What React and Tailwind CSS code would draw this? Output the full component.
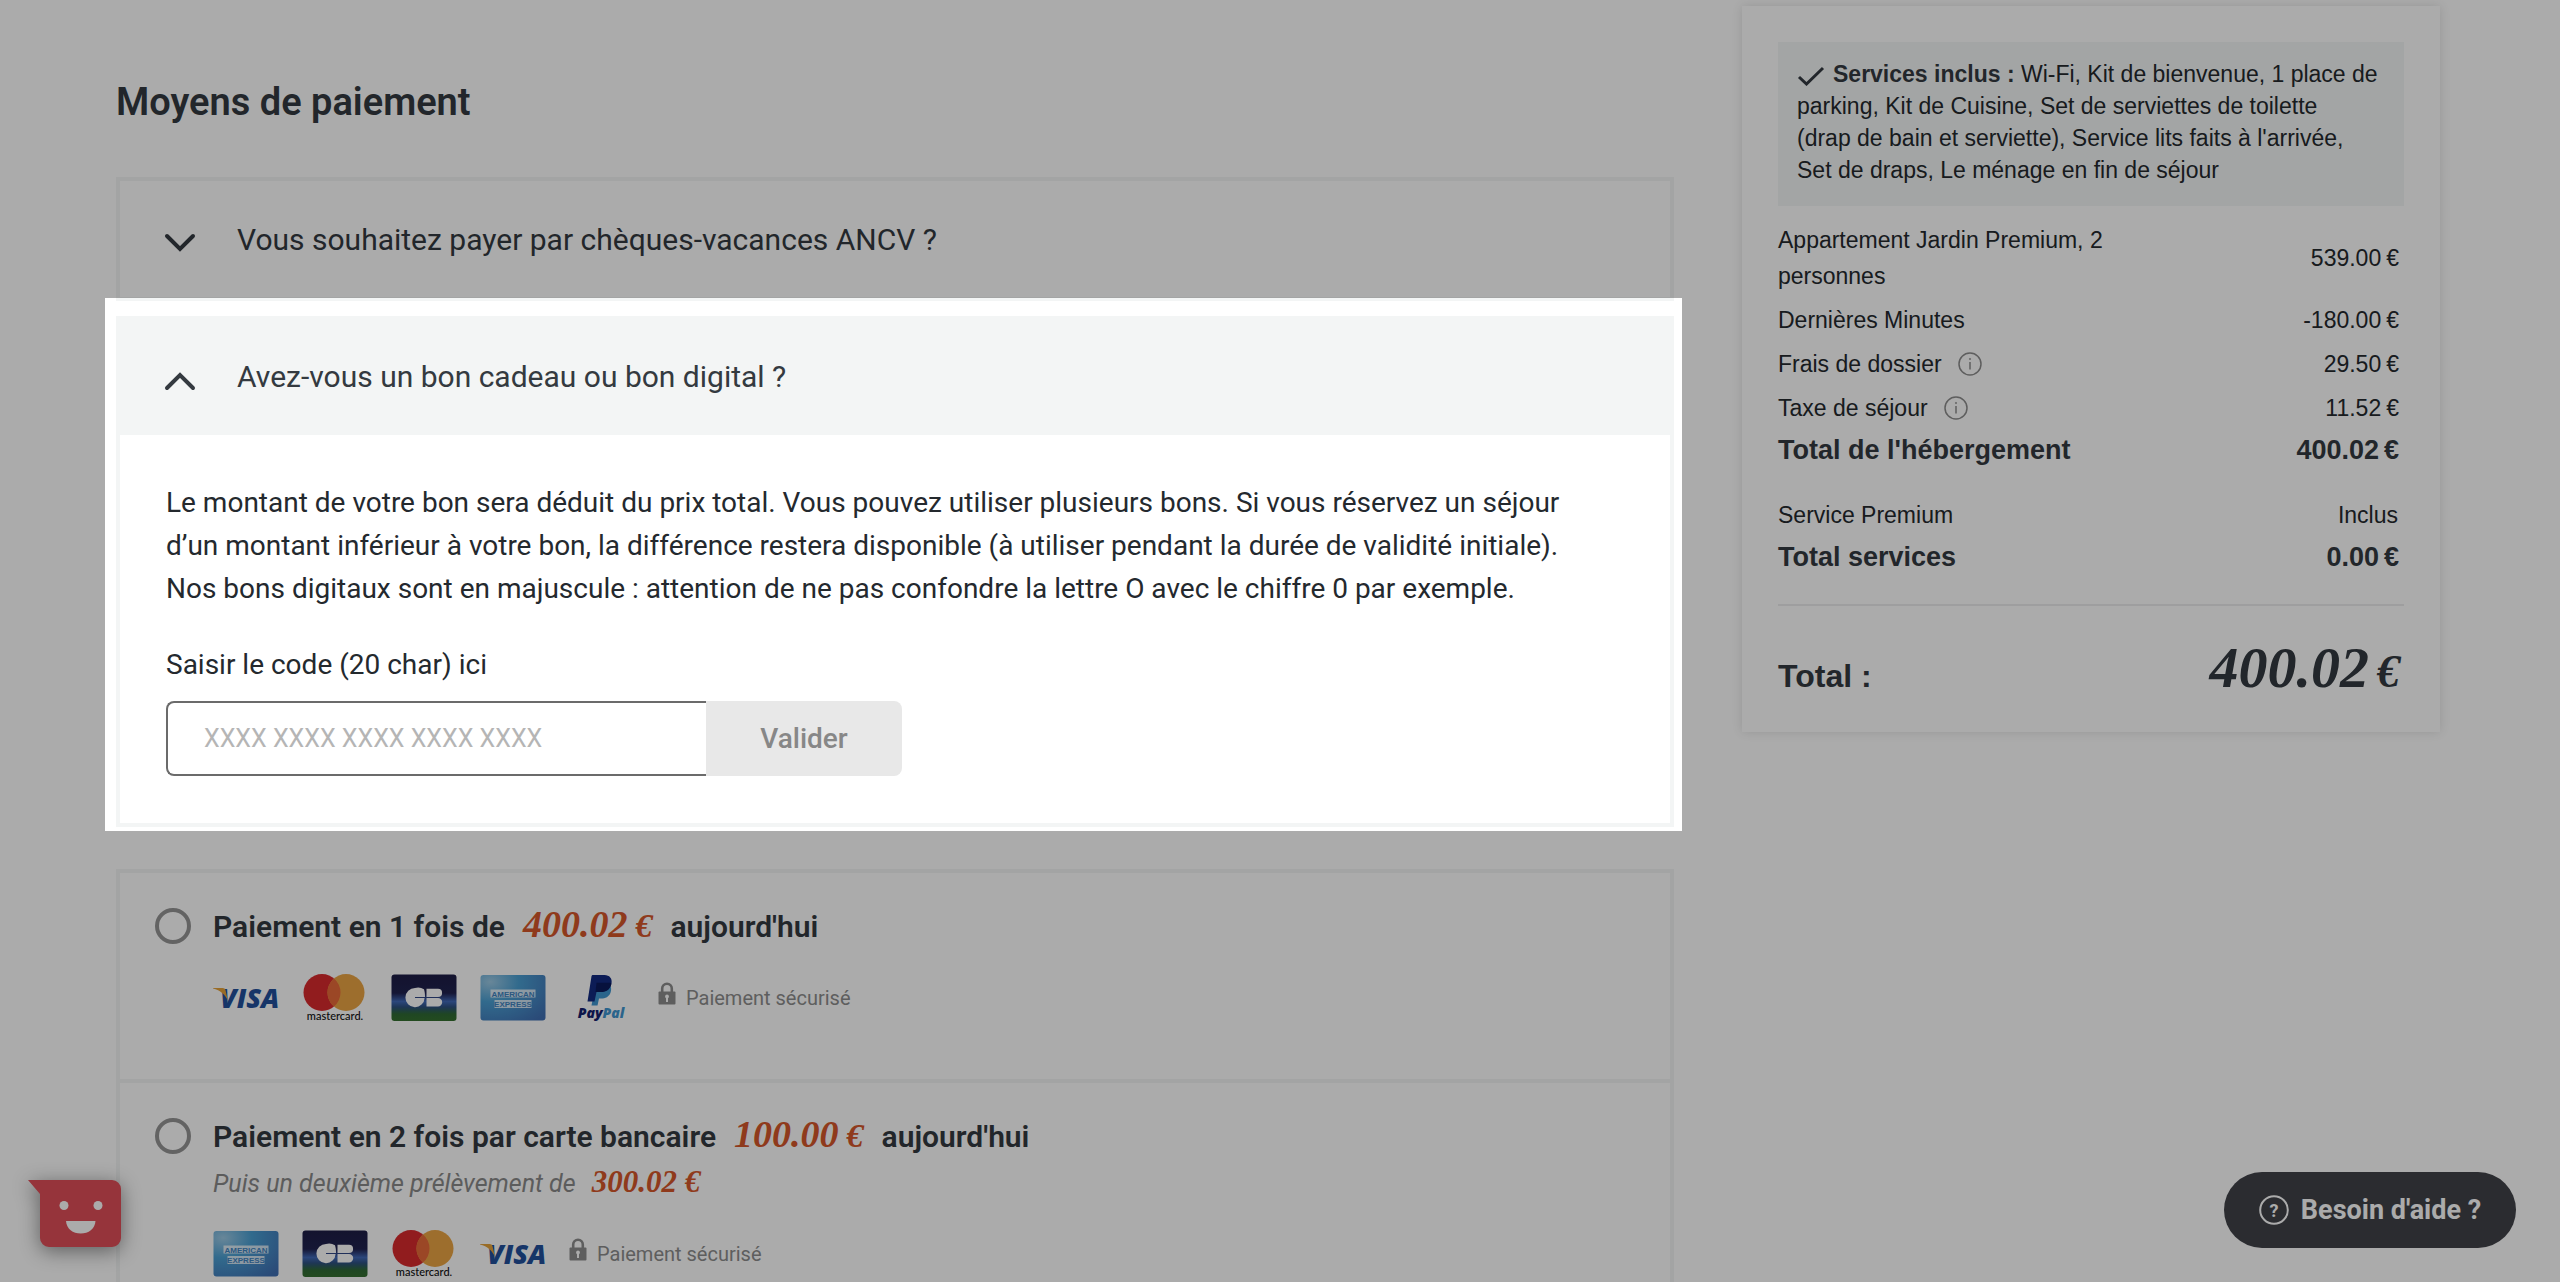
import React from "react";

const serif = "font-['Liberation_Serif',serif] font-bold italic";

function Chevron({ up }) {
  return (
    <svg viewBox="0 0 32 20" className="mt-2 h-5 w-8 shrink-0" fill="none" stroke="#343a40" strokeWidth="4" strokeLinecap="round">
      <path d={up ? "M3 17 16 4 29 17" : "M3 3 16 16 29 3"} />
    </svg>
  );
}

function Visa() {
  return (
    <svg viewBox="0 0 66 48" className="h-12 w-[66px]" role="img" aria-label="Visa">
      <text x="7" y="34" fontFamily="'Open Sans', 'Noto Sans', sans-serif" fontWeight="800" fontStyle="italic" fontSize="27" fill="#22509b">VISA</text>
      <path d="M0 14h9.5c1.700 0 2.600.8 3 2.300L15 27C12 20.500 7.500 16.500 0 14.600z" fill="#e5a13a" />
    </svg>
  );
}

function Mastercard() {
  return (
    <svg viewBox="0 0 66 48" className="h-12 w-[66px] overflow-visible" role="img" aria-label="Mastercard">
      <circle cx="20" cy="18.500" r="18.500" fill="#d82b2e" />
      <circle cx="44" cy="18.500" r="18.500" fill="#eba544" />
      <path d="M32 4.400a18.500 18.500 0 0 1 0 28.200 18.500 18.500 0 0 1 0-28.200z" fill="#e86a3a" />
      <text x="33" y="46" textAnchor="middle" fontFamily="Lato, sans-serif" fontWeight="500" fontSize="11" fill="#111">mastercard.</text>
    </svg>
  );
}

function CarteBancaire({ id }) {
  return (
    <svg viewBox="0 0 66 48" className="h-12 w-[66px]" role="img" aria-label="CB">
      <defs>
        <linearGradient id={id} x1="0" y1="0" x2="0" y2="1">
          <stop offset="0" stopColor="#1d1d45" />
          <stop offset="0.400" stopColor="#20224f" />
          <stop offset="0.580" stopColor="#4169b8" />
          <stop offset="0.700" stopColor="#2d5080" />
          <stop offset="0.850" stopColor="#2f6a35" />
          <stop offset="1" stopColor="#35702f" />
        </linearGradient>
      </defs>
      <rect x="0.500" y="0.500" width="65" height="46.500" rx="3" fill={`url(#${id})`} />
      <path d="M33 15.300A10.500 10 0 0 0 24 14a9.600 9.600 0 1 0 9.600 10H24v-1h10v-.500c0-3-.300-5-1-7.200z" fill="#fff" />
      <path d="M35.500 14.800H47a4.100 4.100 0 0 1 0 8.200H35.500zM35.500 24H47a4.200 4.200 0 0 1 0 8.400H35.500z" fill="#fff" />
    </svg>
  );
}

function Amex({ id }) {
  return (
    <svg viewBox="0 0 66 48" className="h-12 w-[66px]" role="img" aria-label="American Express">
      <defs>
        <radialGradient id={id} cx="0.150" cy="0.150" r="1.100">
          <stop offset="0" stopColor="#9cc9e4" />
          <stop offset="0.400" stopColor="#4a9fd2" />
          <stop offset="1" stopColor="#3f6fb3" />
        </radialGradient>
      </defs>
      <rect x="0.500" y="1" width="65" height="45.500" rx="3" fill={`url(#${id})`} />
      <rect x="10.500" y="15.500" width="45" height="8" fill="#fff" opacity="0.750" />
      <rect x="14.500" y="26" width="37" height="8" fill="#fff" opacity="0.750" />
      <g fontFamily="'Liberation Sans', sans-serif" fontWeight="700" fontSize="8" fill="#3f83c0" textAnchor="middle">
        <text x="33" y="22.500">AMERICAN</text>
        <text x="33" y="33">EXPRESS</text>
      </g>
    </svg>
  );
}

function PayPal() {
  return (
    <svg viewBox="0 0 66 48" className="h-12 w-[66px]" role="img" aria-label="PayPal">
      <path d="M38 9.500c4 1.500 5 5 3.500 9.200-1.500 4-5 5.800-9.500 5.800h-2l-1.500 7H22.500l3-16z" fill="#3f96d0" />
      <path d="M24 1h11.500c5 0 8 3.500 7 8.500-1.200 6-5.500 8.500-11 8.500h-4l-2 9.500H18.500L22.500 2.200C22.700 1.300 23.200 1 24 1z" fill="#122a80" />
      <path d="M27.500 8.700h13.800c1 .500 1 .800.900 1.500C41 15.700 36.800 18 31.500 18h-5z" fill="#0b1a5c" />
      <text x="32" y="44" textAnchor="middle" fontFamily="'Open Sans', sans-serif" fontWeight="800" fontStyle="italic" fontSize="14" fill="#12206e">
        Pay<tspan fill="#3f96d0">Pal</tspan>
      </text>
    </svg>
  );
}

function Secure() {
  return (
    <span className="flex items-center gap-[10px] text-[20px] leading-6 text-[#8d8d8d]">
      <svg viewBox="0 0 18 24" className="-mt-2 h-6 w-[18px]" aria-hidden="true">
        <path d="M4.200 10V6.500a4.800 4.800 0 0 1 9.600 0V10" fill="none" stroke="#8d8d8d" strokeWidth="2.600" />
        <rect x="0.500" y="9.500" width="17" height="13" rx="1" fill="#8d8d8d" />
        <circle cx="9" cy="14.500" r="1.900" fill="#fff" />
        <rect x="8" y="15" width="2" height="5" fill="#fff" />
      </svg>
      Paiement sécurisé
    </span>
  );
}

function Info() {
  return (
    <svg viewBox="0 0 24 24" className="h-6 w-6" fill="none" stroke="#8d8d8d" aria-hidden="true">
      <circle cx="12" cy="12" r="11" strokeWidth="1.500" />
      <path d="M12 10v7.500" strokeWidth="1.500" />
      <circle cx="12" cy="7" r="0.700" fill="#8d8d8d" strokeWidth="0.600" />
    </svg>
  );
}

function Row({ label, value, info, bold }) {
  return (
    <tr className={bold ? "h-10 text-[27px] leading-8 font-bold" : "leading-9 font-normal text-[#24292e]"}>
      <th scope="row" className="text-left font-[weight:inherit]">
        <span className={bold ? "flex items-center font-bold" : "flex items-center gap-4 font-normal"}>
          {label}
          {info && <Info />}
        </span>
      </th>
      <td className="pr-[5px] text-right whitespace-nowrap">
        {value}
        <span className="ml-[5px]">€</span>
      </td>
    </tr>
  );
}

function Option({ id, title, price, sub, children }) {
  return (
    <div className="flex gap-[22px] pt-[33px] pb-[57px] pl-[35px]">
      <input
        type="radio"
        name="paiement"
        id={id}
        className="mt-[2px] size-9 shrink-0 appearance-none rounded-full border-4 border-[#949494]"
      />
      <div>
        <label htmlFor={id} className="flex h-10 items-baseline text-[30px] leading-10 font-semibold whitespace-nowrap">
          {title}
          <span className={`${serif} mx-[18px] text-[38px] leading-9 text-[#d5572b]`}>
            {price}
            <span className="ml-2 text-[34px] leading-none">€</span>
          </span>
          aujourd'hui
        </label>
        {sub}
        <div className="mt-7 flex items-center gap-[23px]">
          {children}
          <Secure />
        </div>
      </div>
    </div>
  );
}

export default function App() {
  return (
    <div className="relative h-screen overflow-hidden bg-white font-['Roboto',sans-serif] text-[#343a40]">
      <main className="grid grid-cols-[minmax(0,1fr)_698px] gap-[68px] pr-[120px] pl-[116px]">
        <section className="pt-[78px]">
          <h1 className="text-[38px] leading-[48px] font-semibold">Moyens de paiement</h1>

          <div className="mt-[51px] border-4 border-[#f3f5f5]">
            <button type="button" className="flex h-[116px] w-full items-center gap-[41px] pl-11 text-left text-[30px]">
              <Chevron />
              Vous souhaitez payer par chèques-vacances ANCV ?
            </button>
          </div>

          <div className="relative mt-[15px] border-4 border-[#f3f5f5]">
            <div className="pointer-events-none absolute -top-[22px] -right-3 -bottom-2 -left-[15px] z-20 shadow-[0_0_0_9999px_rgba(0,0,0,0.33)]" />
            <button type="button" className="flex h-[115px] w-full items-center gap-[41px] bg-[#f3f5f5] pb-[2px] pl-11 text-left text-[30px]">
              <Chevron up />
              Avez-vous un bon cadeau ou bon digital ?
            </button>
            <div className="px-[46px] pt-[46px] pb-[47px] text-[28px] leading-[43px] text-[#24292e]">
              <p>
                Le montant de votre bon sera déduit du prix total. Vous pouvez utiliser plusieurs bons. Si vous réservez un séjour
                <br />
                d’un montant inférieur à votre bon, la différence restera disponible (à utiliser pendant la durée de validité initiale).
                <br />
                Nos bons digitaux sont en majuscule : attention de ne pas confondre la lettre O avec le chiffre 0 par exemple.
              </p>
              <label htmlFor="code" className="mt-[33px] block">
                Saisir le code (20 char) ici
              </label>
              <div className="mt-[15px] flex h-[75px]">
                <input
                  id="code"
                  placeholder="XXXX XXXX XXXX XXXX XXXX"
                  className="w-[540px] rounded-l-lg border-2 border-r-0 border-[#6b6b6b] pl-9 text-[25px] placeholder:text-[#b5b5b5]"
                />
                <button type="button" className="w-[196px] rounded-r-lg bg-[#e8e8e8] text-[28px] font-medium text-[#878787]">
                  Valider
                </button>
              </div>
            </div>
          </div>

          <div className="mt-[42px] divide-y-4 divide-[#f3f5f5] border-4 border-[#f3f5f5]">
            <Option id="p1" title="Paiement en 1 fois de" price="400.02">
              <Visa />
              <Mastercard />
              <CarteBancaire id="cb1" />
              <Amex id="ax1" />
              <PayPal />
            </Option>
            <Option
              id="p2"
              title="Paiement en 2 fois par carte bancaire"
              price="100.00"
              sub={
                <p className="mt-2 flex h-[38px] items-baseline text-[25px] leading-10 text-[#8a8a8a] italic">
                  Puis un deuxième prélèvement de
                  <span className={`${serif} ml-4 text-[31px] leading-9 text-[#d5572b]`}>
                    300.02<span className="ml-2 leading-none">€</span>
                  </span>
                </p>
              }
            >
              <Amex id="ax2" />
              <CarteBancaire id="cb2" />
              <Mastercard />
              <Visa />
            </Option>
          </div>
        </section>

        <aside className="mt-[6px] self-start bg-white px-9 pt-9 font-['Liberation_Sans',sans-serif] text-[23px] shadow-[0_0_10px_rgba(0,0,0,0.12)]">
          <p className="bg-[#f4f7f7] px-[19px] pt-4 pb-5 leading-8 whitespace-nowrap text-[#24292e]">
            <svg viewBox="0 0 28 20" className="mr-2 inline h-5 w-7 align-[-4px]" fill="none" stroke="#343a40" strokeWidth="3" aria-hidden="true">
              <path d="M2 11 9.500 18 26 2" />
            </svg>
            <strong className="text-[#343a40]">Services inclus :</strong> Wi-Fi, Kit de bienvenue, 1 place de
            <br />
            parking, Kit de Cuisine, Set de serviettes de toilette
            <br />
            (drap de bain et serviette), Service lits faits à l'arrivée,
            <br />
            Set de draps, Le ménage en fin de séjour
          </p>
          <table className="mt-3 w-full [&_td]:py-1 [&_th]:py-1">
            <tbody>
              <Row label={<span>Appartement Jardin Premium, 2<br />personnes</span>} value="539.00" />
              <Row label="Dernières Minutes" value="-180.00" />
              <Row label="Frais de dossier" value="29.50" info />
              <Row label="Taxe de séjour" value="11.52" info />
              <Row label="Total de l'hébergement" value="400.02" bold />
            </tbody>
          </table>
          <table className="mt-[23px] w-full [&_td]:py-1 [&_th]:py-1">
            <tbody>
              <tr className="leading-9 text-[#24292e]">
                <th scope="row" className="text-left font-normal">Service Premium</th>
                <td className="pr-[6px] text-right">Inclus</td>
              </tr>
              <Row label="Total services" value="0.00" bold />
            </tbody>
          </table>
          <div className="mt-[27px] flex h-[128px] items-baseline justify-between border-t-2 border-[#ececee] pt-5 pr-1">
            <span className="text-[32px] leading-9 font-bold">Total :</span>
            <span className={`${serif} text-[58px] leading-[84px]`}>
              400.02<span className="ml-2 text-[46px] leading-none">€</span>
            </span>
          </div>
        </aside>
      </main>

      <button type="button" aria-label="Avis" className="absolute bottom-8 left-7 drop-shadow-[0_4px_10px_rgba(0,0,0,0.45)]">
        <svg viewBox="0 0 94 70" className="h-[70px] w-[94px]">
          <path d="M0 0H84a9 9 0 0 1 9 9V58a9 9 0 0 1-9 9H21a9 9 0 0 1-9-9V14z" fill="#e04e58" />
          <circle cx="36" cy="25.500" r="4.500" fill="#fff" />
          <circle cx="70" cy="25.500" r="4.500" fill="#fff" />
          <path d="M38 41H67.500C67 49 60.500 53.500 52.700 53.500S38.500 49 38 41z" fill="#fff" />
        </svg>
      </button>

      <button
        type="button"
        className="absolute right-11 bottom-[34px] flex h-[76px] w-[292px] items-center justify-center gap-3 rounded-full bg-[#404248] text-[27px] font-bold text-white"
      >
        <svg viewBox="0 0 30 30" className="size-[30px]" aria-hidden="true">
          <circle cx="15" cy="15" r="13.800" fill="none" stroke="#fff" strokeWidth="2" />
          <text x="15" y="21.500" textAnchor="middle" fontSize="18" fontWeight="700" fill="#fff">?</text>
        </svg>
        Besoin d'aide ?
      </button>
    </div>
  );
}
